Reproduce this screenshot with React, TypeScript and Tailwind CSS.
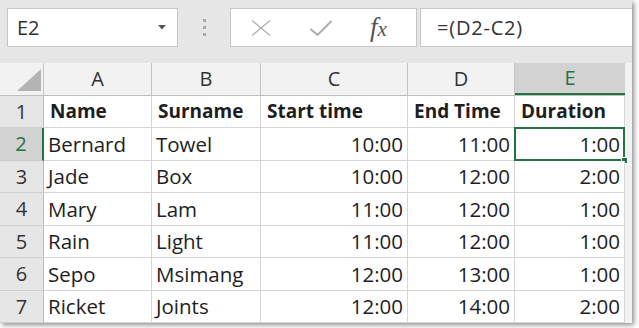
import React from "react";

const cols = [44, 108, 109, 147, 107, 110];
const rowH = [32, 33, 32, 33, 32, 33, 32];

const data: [string, string, string, string, string][] = [
  ["Name", "Surname", "Start time", "End Time", "Duration"],
  ["Bernard", "Towel", "10:00", "11:00", "1:00"],
  ["Jade", "Box", "10:00", "12:00", "2:00"],
  ["Mary", "Lam", "11:00", "12:00", "1:00"],
  ["Rain", "Light", "11:00", "12:00", "1:00"],
  ["Sepo", "Msimang", "12:00", "13:00", "1:00"],
  ["Ricket", "Joints", "12:00", "14:00", "2:00"],
];

const font = { fontFamily: '"Open Sans", "Noto Sans", sans-serif' };

export default function App() {
  return (
    <div className="w-[639px] h-[328px] bg-white overflow-hidden" style={font}>
      <div className="w-[632px] h-[323px] bg-[#e6e6e6] shadow-[2px_2px_5px_rgba(0,0,0,0.45)] flex flex-col">
        {/* Toolbar */}
        <div className="h-[63px] flex items-start pt-[8px] pl-[7px]">
          <div className="w-[171px] h-[39px] bg-white border border-[#c6c6c6] flex items-center justify-between pl-[9px] pr-[11px]">
            <span className="text-[20px] text-[#333]">E2</span>
            <svg width="8" height="5" viewBox="0 0 8 5">
              <path d="M0 0 L8 0 L4 4.5 Z" fill="#555" />
            </svg>
          </div>
          <div className="w-[52px] h-[39px] flex flex-col items-center justify-center gap-[4px]">
            <div className="w-[3px] h-[3px] bg-[#a8a8a8]" />
            <div className="w-[3px] h-[3px] bg-[#a8a8a8]" />
            <div className="w-[3px] h-[3px] bg-[#a8a8a8]" />
          </div>
          <div className="w-[187px] h-[39px] bg-white border border-[#c6c6c6] flex items-center pl-[19px]">
            <svg width="22" height="18" viewBox="0 0 22 18">
              <path d="M2 1.5 L20 16.5 M20 1.5 L2 16.5" stroke="#b0b0b0" strokeWidth="1.4" fill="none" />
            </svg>
            <svg className="ml-[37px]" width="24" height="18" viewBox="0 0 24 18">
              <path d="M1.5 10 L8.5 16 L22.5 2" stroke="#acacac" strokeWidth="2" fill="none" />
            </svg>
            <span
              className="ml-[37px] text-[#555] italic leading-none flex items-baseline"
              style={{ fontFamily: '"Liberation Serif", "DejaVu Serif", serif' }}
            >
              <span className="text-[27px]">f</span>
              <span className="text-[21px]">x</span>
            </span>
          </div>
          <div className="ml-[3px] w-[212px] h-[39px] bg-white border-y border-l border-[#c6c6c6] flex items-center pl-[16px]">
            <span className="text-[20px] text-[#333] tracking-[0.8px]">=(D2-C2)</span>
          </div>
        </div>

        {/* Sheet */}
        <div className="flex-1 flex bg-[#f2f2f2]">
          <div className="flex flex-col">
            {/* Header row */}
            <div className="flex h-[33px] border-b border-[#bdbdbd]">
              {cols.map((w, i) => {
                if (i === 0) {
                  return (
                    <div key={i} className="h-full border-r border-[#c4c4c4] flex items-end justify-end pr-[2px] pb-[4px]" style={{ width: w }}>
                      <svg width="24" height="22" viewBox="0 0 24 22">
                        <path d="M24 0 L24 22 L0 22 Z" fill="#b4b4b4" />
                      </svg>
                    </div>
                  );
                }
                const sel = i === 5;
                return (
                  <div
                    key={i}
                    className={
                      sel
                        ? "h-full bg-[#d2d2d2] border-b-2 border-[#217346] text-[#217346] flex items-center justify-center text-[20px] -mb-px"
                        : "h-full border-r border-[#c4c4c4] text-[#333] flex items-center justify-center text-[20px]"
                    }
                    style={{ width: w }}
                  >
                    {"ABCDE"[i - 1]}
                  </div>
                );
              })}
            </div>
            {data.map((row, r) => {
              const selRow = r === 1;
              return (
                <div key={r} className="flex" style={{ height: rowH[r] }}>
                  <div
                    className={
                      selRow
                        ? "h-full bg-[#d2d2d2] border-r-2 border-r-[#217346] border-b border-b-[#c9c9c9] text-[#217346] flex items-center justify-center text-[20px]"
                        : "h-full bg-[#e6e6e6] border-r border-r-[#bdbdbd] border-b border-b-[#d0d0d0] text-[#333] flex items-center justify-center text-[20px]"
                    }
                    style={{ width: cols[0] }}
                  >
                    {r + 1}
                  </div>
                  {row.map((cell, c) => {
                    const num = r > 0 && c >= 2;
                    const bold = r === 0;
                    const sel = r === 1 && c === 4;
                    return (
                      <div
                        key={c}
                        className={
                          "relative h-full bg-white border-r border-b border-[#d6d6d6] flex items-center text-[#1e1e1e] " +
                          (num ? "justify-end pr-[4px] " : bold ? "pl-[6px] " : "pl-[4px] ") +
                          (bold ? "font-bold text-[19px] " : "text-[20.5px] ")
                        }
                        style={{ width: cols[c + 1] }}
                      >
                        {cell}
                        {sel && (
                          <>
                            <div className="absolute -left-px -top-px -right-px -bottom-px border-2 border-[#217346] pointer-events-none" />
                            <div className="absolute -right-[4px] -bottom-[4px] w-[7px] h-[7px] bg-[#217346] border border-white" />
                          </>
                        )}
                      </div>
                    );
                  })}
                </div>
              );
            })}
          </div>
        </div>
      </div>
    </div>
  );
}
